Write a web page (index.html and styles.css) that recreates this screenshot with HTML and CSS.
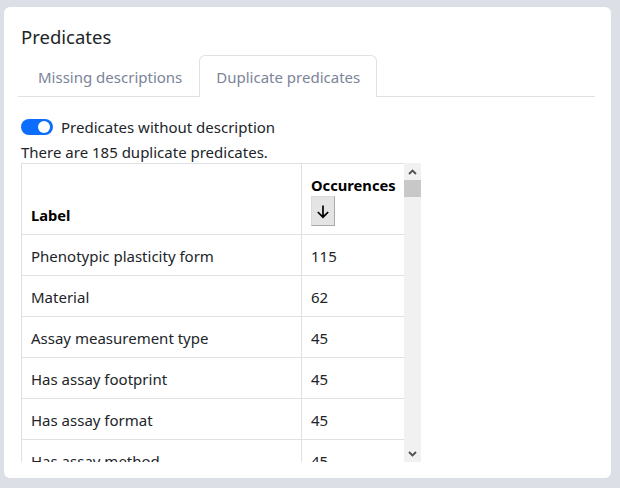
FILE: index.html
```html
<!DOCTYPE html>
<html lang="en">
<head>
<meta charset="utf-8">
<title>Predicates</title>
<link rel="stylesheet" href="styles.css">
</head>
<body>
<div class="card">
  <h5 class="title">Predicates</h5>
  <ul class="tabs">
    <li class="tab">Missing descriptions</li>
    <li class="tab active">Duplicate predicates</li>
  </ul>
  <div class="switch-row">
    <span class="switch"><span class="knob"></span></span>
    <span class="switch-label">Predicates without description</span>
  </div>
  <p class="summary">There are 185 duplicate predicates.</p>
  <div class="table-frame">
    <div class="table-view">
      <table class="grid">
        <colgroup><col class="c1"><col class="c2"></colgroup>
        <thead>
          <tr>
            <th>Label</th>
            <th>
              <div class="th-text">Occurences</div>
              <button class="sort-btn" type="button">
                <svg width="14" height="15" viewBox="0 0 14 15"><path d="M7 1.5V13.2M1.8 8L7 13.2L12.2 8" fill="none" stroke="#000" stroke-width="1.7"/></svg>
              </button>
            </th>
          </tr>
        </thead>
        <tbody>
          <tr><td>Phenotypic plasticity form</td><td>115</td></tr>
          <tr><td>Material</td><td>62</td></tr>
          <tr><td>Assay measurement type</td><td>45</td></tr>
          <tr><td>Has assay footprint</td><td>45</td></tr>
          <tr><td>Has assay format</td><td>45</td></tr>
          <tr><td>Has assay method</td><td>45</td></tr>
        </tbody>
      </table>
    </div>
    <div class="scrollbar">
      <div class="sb-btn">
        <svg width="9" height="6" viewBox="0 0 9 6"><path d="M1 5L4.5 1.5L8 5" fill="none" stroke="#505050" stroke-width="1.8"/></svg>
      </div>
      <div class="sb-thumb"></div>
      <div class="sb-track"></div>
      <div class="sb-btn">
        <svg width="9" height="6" viewBox="0 0 9 6"><path d="M1 1L4.5 4.5L8 1" fill="none" stroke="#505050" stroke-width="1.8"/></svg>
      </div>
    </div>
  </div>
</div>
</body>
</html>
```

FILE: styles.css
```css
* { box-sizing: border-box; }
html, body { margin: 0; }
body {
  background: #dcdfe5;
  padding: 7px 9px 10px 4px;
  font-family: "Noto Sans", "Open Sans", sans-serif;
  font-size: 15px;
  color: #212529;
  height: 488px;
  overflow: hidden;
}
.card {
  background: #fff;
  border-radius: 6px;
  height: 471px;
  padding: 18px 16px 0 17px;
  overflow: hidden;
}
.title {
  margin: 0;
  font-size: 18.5px;
  font-weight: 400;
  line-height: 24px;
}
.tabs {
  list-style: none;
  margin: 6px 0 0 -3px;
  padding: 0 0 0 3px;
  display: flex;
  border-bottom: 1px solid #dee2e6;
}
.tab {
  height: 41px;
  line-height: 39px;
  padding: 2px 16px 0;
  border: 1px solid transparent;
  border-bottom: 0;
  border-radius: 6px 6px 0 0;
  color: #7b8498;
  margin-bottom: -1px;
}
.tab.active {
  border-color: #dee2e6;
  background: #fff;
  height: 42px;
}
.switch-row {
  margin-top: 19px;
  display: flex;
  align-items: center;
  gap: 8px;
  height: 22px;
  line-height: 22px;
}
.switch {
  width: 32px;
  height: 16px;
  border-radius: 8px;
  background: #0d6efd;
  display: flex;
  align-items: center;
  justify-content: flex-end;
  padding-right: 3px;
  flex: none;
}
.knob {
  width: 12px;
  height: 12px;
  border-radius: 50%;
  background: #fff;
}
.summary {
  margin: 3px 0 0;
  line-height: 22px;
}
.table-frame {
  display: flex;
  width: 400px;
  height: 299px;
}
.table-view {
  width: 383px;
  height: 299px;
  overflow: hidden;
  flex: none;
}
.grid {
  width: 383px;
  table-layout: fixed;
  border-collapse: collapse;
  border: 1px solid #dee2e6;
}
.c1 { width: 280px; }
.c2 { width: 103px; }
.grid th, .grid td {
  border: 1px solid #dee2e6;
  text-align: left;
  padding: 9px 10px 7px 9px;
  line-height: 24px;
}
.grid th {
  font-weight: 700;
  font-size: 14.7px;
  vertical-align: bottom;
  padding: 10px 6px 8px 9px;
  line-height: 22px;
  color: #000;
}
.th-text { line-height: 22px; }
.sort-btn {
  display: flex;
  align-items: center;
  justify-content: center;
  width: 24px;
  height: 30px;
  padding: 0;
  background: #e4e4e4;
  border: 1px solid;
  border-color: #dadada #a9a9a9 #a9a9a9 #dadada;
}
.scrollbar {
  width: 17px;
  flex: none;
  display: flex;
  flex-direction: column;
  background: #f1f1f1;
}
.sb-btn {
  height: 17px;
  display: flex;
  align-items: center;
  justify-content: center;
}
.sb-thumb {
  height: 17px;
  background: #c8c8c8;
}
.sb-track { flex: 1; }
```
